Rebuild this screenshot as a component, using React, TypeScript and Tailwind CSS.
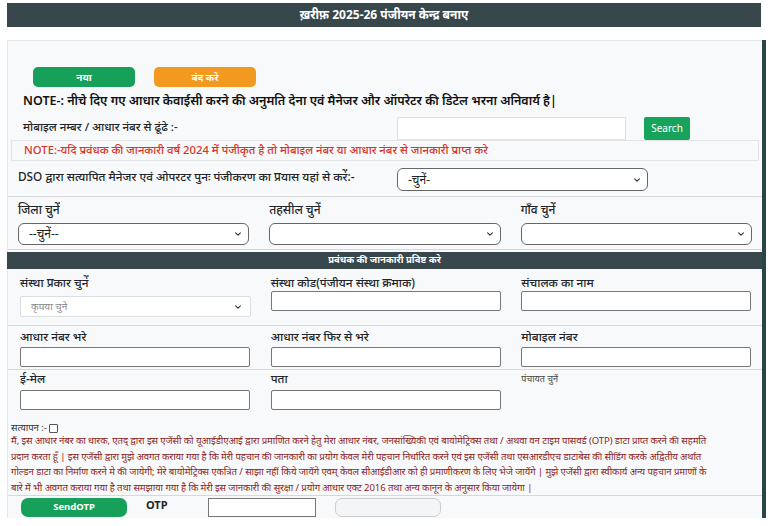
import React from "react";

const Chevron = () => (
  <svg width="8" height="8" viewBox="0 0 10 10" className="shrink-0">
    <path d="M2 3.5 L5 6.5 L8 3.5" fill="none" stroke="#333" strokeWidth="1.4" strokeLinecap="round" strokeLinejoin="round" />
  </svg>
);

const FakeSelect = ({ text, cls, textCls }: { text: string; cls: string; textCls?: string }) => (
  <div className={"flex items-center justify-between bg-white " + cls}>
    <span className={textCls ?? "text-[12px] text-[#222]"}>{text}</span>
    <Chevron />
  </div>
);

const Input = ({ cls }: { cls?: string }) => (
  <input className={"block bg-white border border-[#767676] rounded-[2px] outline-none " + (cls ?? "h-[20px] w-full")} />
);

export default function App() {
  const decl = [
    "मैं, इस आधार नंबर का धारक, एतद् द्वारा इस एजेंसी को यूआईडीएआई द्वारा प्रमाणित करने हेतु मेरा आधार नंबर, जनसांख्यिकी एवं बायोमेट्रिक्स तथा / अथवा वन टाइम पासवर्ड (OTP) डाटा प्राप्त करने की सहमति",
    "प्रदान करता हूँ | इस एजेंसी द्वारा मुझे अवगत कराया गया है कि मेरी पहचान की जानकारी का प्रयोग केवल मेरी पहचान निर्धारित करने एवं इस एजेंसी तथा एसआरडीएच डाटाबेस की सीडिंग करके अद्वितीय अर्थात",
    "गोल्डन डाटा का निर्माण करने मे की जायेगी; मेरे बायोमेट्रिक्स एकत्रित / साझा नहीं किये जायेंगे एवम् केवल सीआईडीआर को ही प्रमाणीकरण के लिए भेजे जायेंगे | मुझे एजेंसी द्वारा स्वीकार्य अन्य पहचान प्रमाणों के",
    "बारे में भी अवगत कराया गया है तथा समझाया गया है कि मेरी इस जानकारी की सुरक्षा / प्रयोग आधार एक्ट 2016 तथा अन्य कानून के अनुसार किया जायेगा |",
  ];
  return (
    <div className="w-[768px] h-[526px] overflow-hidden bg-white text-[#212529] font-['Noto_Sans','Liberation_Sans',sans-serif]">
      <div className="pt-[3px] px-[7px]">
        <div className="h-[24px] bg-[#37474c] flex items-center justify-center text-white text-[12px] font-bold">
          ख़रीफ़ 2025-26 पंजीयन केन्द्र बनाए
        </div>
      </div>

      <div className="mt-[13px] ml-[7px] w-[759px] border-r-[4px] border-[#28464a]">
        <div className="bg-[#f8f9fa] border-t border-l border-[#e6e8ea]">
          {/* buttons */}
          <div className="pt-[26px] pl-[25px] flex gap-[19px]">
            <button className="w-[102px] h-[20px] rounded-[5px] bg-[#17a05a] text-white text-[10px] font-bold flex items-center justify-center">नया</button>
            <button className="w-[102px] h-[20px] rounded-[5px] bg-[#f29a1f] text-white text-[10px] font-bold flex items-center justify-center">बंद करे</button>
          </div>
          <div className="pl-[15px] mt-[3px] h-[22px] flex items-center text-[12.5px] font-semibold text-[#111]">
            NOTE-: नीचे दिए गए आधार केवाईसी करने की अनुमति देना एवं मैनेजर और ऑपरेटर की डिटेल भरना अनिवार्य है|
          </div>
          {/* search */}
          <div className="flex items-start pl-[15px] h-[28px]">
            <span className="text-[11.5px] w-[374px] font-medium mt-[6px]">मोबाइल नम्बर / आधार नंबर से ढूंढे :-</span>
            <input className="w-[229px] h-[23px] bg-white border border-[#dee2e6] outline-none mt-[5px]" />
            <button className="ml-[18px] mt-[5px] w-[46px] h-[23px] rounded-[2px] bg-[#18a35c] text-white text-[10px] flex items-center justify-center">Search</button>
          </div>
          <div className="mx-[3px] h-[21px] border border-[#e2e4e6] flex items-center pl-[12px] text-[11.3px] font-medium text-[#d9342b]">
            NOTE:-यदि प्रवंधक की जानकारी वर्ष 2024 में पंजीकृत है तो मोबाइल नंबर या आधार नंबर से जानकारी प्राप्त करे
          </div>
          {/* DSO */}
          <div className="h-[36px] border-b border-[#d6d8da] flex items-center pl-[10px]">
            <span className="w-[379px] text-[11.8px] font-medium -mt-[4px]">DSO द्वारा सत्यापित मैनेजर एवं ओपरटर पुनः पंजीकरण का प्रयास यहां से करें:-</span>
            <FakeSelect text="-चुनें-" cls="mt-[2px] w-[251px] h-[23px] border border-[#666] rounded-[6px] pl-[10px] pr-[6px]" />
          </div>
          {/* district */}
          <div className="grid grid-cols-3 gap-x-[20px] px-[10px] pt-[4px] pb-[4px] border-b border-[#d6d8da]">
            {["जिला चुनें", "तहसील चुनें", "गाँव चुनें"].map((l, i) => (
              <div key={l}>
                <div className="text-[12px] font-medium h-[18px] flex items-center">{l}</div>
                <FakeSelect text={i === 0 ? "--चुनें--" : ""} cls="mt-[4px] h-[22px] border border-[#666] rounded-[6px] pl-[10px] pr-[6px]" />
              </div>
            ))}
          </div>
          {/* section header */}
          <div className="-ml-[1px] mt-[2px] h-[17px] bg-[#37474c] flex items-center justify-center text-white text-[9.5px] font-bold">
            प्रवंधक की जानकारी प्रविष्ट करे
          </div>
          {/* form rows */}
          <div className="grid grid-cols-3 gap-x-[20px] pl-[12px] pr-[10px] pt-[7px] h-[57px] border-b border-[#d6d8da]">
            <div>
              <div className="text-[11.8px] font-medium h-[14px] flex items-center">संस्था प्रकार चुनें</div>
              <FakeSelect text="कृपया चुने" cls="mt-[6px] h-[21px] border border-[#dcdfe2] rounded-[2px] pl-[10px] pr-[8px]" textCls="text-[10px] text-[#888]" />
            </div>
            <div>
              <div className="text-[11.8px] font-medium h-[14px] flex items-center">संस्था कोड(पंजीयन संस्था क्रमाक)</div>
              <Input cls="mt-[1px] h-[20px] w-[230px]" />
            </div>
            <div>
              <div className="text-[11.8px] font-medium h-[14px] flex items-center">संचालक का नाम</div>
              <Input cls="mt-[1px] h-[20px] w-[230px]" />
            </div>
          </div>
          <div className="grid grid-cols-3 gap-x-[20px] pl-[12px] pr-[10px] pt-[4px] h-[44px] border-b border-[#d6d8da]">
            {["आधार नंबर भरे", "आधार नंबर फिर से भरे", "मोबाइल नंबर"].map((l) => (
              <div key={l}>
                <div className="text-[11.8px] font-medium h-[14px] flex items-center">{l}</div>
                <Input cls="mt-[3px] h-[20px] w-[230px]" />
              </div>
            ))}
          </div>
          <div className="grid grid-cols-3 gap-x-[20px] pl-[12px] pr-[10px] pt-[2px] h-[54px]">
            {["ई-मेल", "पता"].map((l) => (
              <div key={l}>
                <div className="text-[11.8px] font-medium h-[14px] flex items-center">{l}</div>
                <Input cls="mt-[4px] h-[20px] w-[230px]" />
              </div>
            ))}
            <div className="text-[9px] text-[#444] h-[14px] flex items-center">पंचायत चुनें</div>
          </div>
          {/* declaration */}
          <div className="pl-[3px] pr-[6px] h-[72px] border-b border-[#d6d8da]">
            <div className="text-[9.5px] text-[#333] flex items-center gap-[2px] h-[9px]">
              सत्यापन :-
              <span className="inline-block w-[9px] h-[9px] border border-[#555] rounded-[1px] bg-white" />
            </div>
            {decl.map((t, i) => (
              <div key={i} className="whitespace-nowrap text-[9.6px] leading-[15.5px] text-[#8c1d1d] tracking-[-0.1px]">{t}</div>
            ))}
          </div>
          {/* OTP row */}
          <div className="flex items-center pl-[13px] h-[22px]">
            <button className="w-[106px] h-[19px] rounded-[7px] bg-[#17a05a] text-white text-[9.5px] font-bold flex items-center justify-center">SendOTP</button>
            <span className="ml-[19px] text-[11px] font-bold -mt-[4px]">OTP</span>
            <input className="ml-[40px] w-[108px] h-[19px] bg-white border border-[#767676] outline-none" />
            <button className="ml-[19px] w-[106px] h-[19px] rounded-[7px] bg-[#f4f5f6] border border-[#c9ccce]" />
          </div>
        </div>
      </div>
    </div>
  );
}
